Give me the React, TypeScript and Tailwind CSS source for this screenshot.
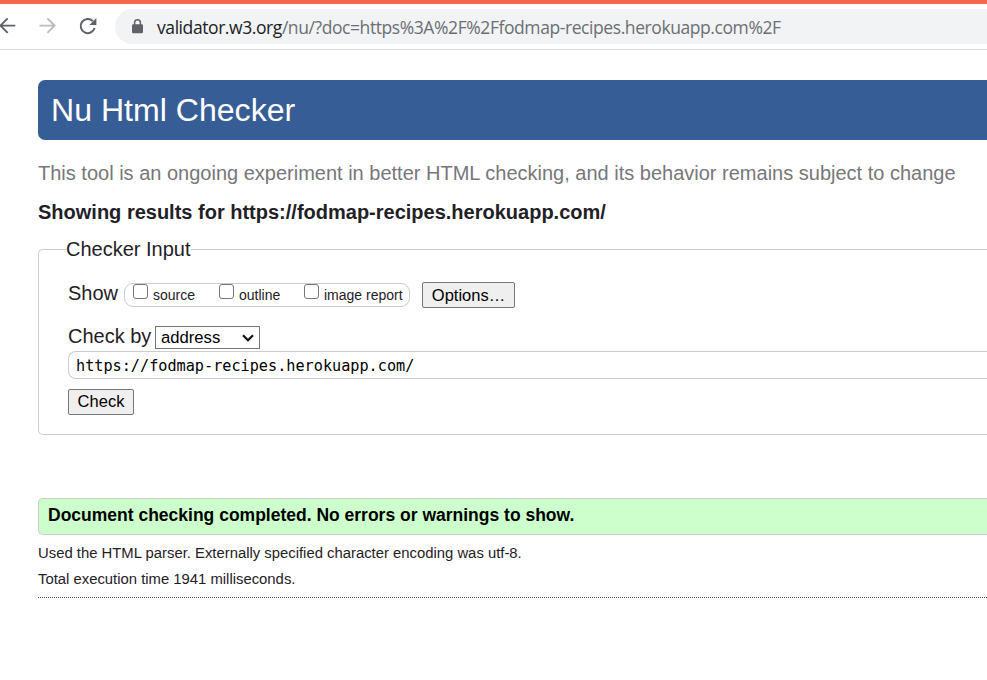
import type { ReactNode } from "react";

function CheckOption({ children, className }: { children: ReactNode; className: string }) {
  return (
    <label className={`flex h-[22px] items-start text-[14px] leading-[23px] ${className}`}>
      <span className="mr-[5px] size-[15px] shrink-0 rounded-[3px] border-[1.5px] border-[#767676] bg-white" />
      <span className="whitespace-nowrap">{children}</span>
    </label>
  );
}

function BrowserBar() {
  return (
    <div className="flex h-[46px] items-start border-b border-[#dadce0] bg-white">
      <svg className="mt-[14px] h-[16px] w-[16px] shrink-0" viewBox="0 0 16 16" fill="none" stroke="#5f6368" strokeWidth="1.9">
        <path d="M15.3 7.6H0.5M7.7 0.4L0.5 7.6L7.7 14.8" />
      </svg>
      <svg className="ml-[23px] mt-[14px] h-[16px] w-[17px] shrink-0" viewBox="0 0 17 16" fill="none" stroke="#babcbe" strokeWidth="1.9">
        <path d="M0.5 7.6H15.6M8.4 0.4L15.6 7.6L8.4 14.8" />
      </svg>
      <svg className="ml-[23px] mt-[13px] h-[18px] w-[18px] shrink-0" viewBox="0 0 18 18" fill="none">
        <path d="M15.6 11A7.1 7.1 0 1 1 13.9 4.1" stroke="#5f6368" strokeWidth="2" />
        <path d="M17.4 1V8H10.4Z" fill="#5f6368" />
      </svg>
      <div className="ml-[18px] mt-[5px] flex h-[35px] flex-1 items-center overflow-hidden rounded-l-full bg-[#f1f3f4] pl-[17px]">
        <svg className="h-[15px] w-[11px] shrink-0" viewBox="0 0 11 15">
          <path d="M2.6 6V3.7a2.9 2.9 0 0 1 5.8 0V6" fill="none" stroke="#5f6368" strokeWidth="1.5" />
          <rect x="0" y="5.3" width="11" height="9" rx="1.2" fill="#5f6368" />
        </svg>
        <span className="ml-[14px] whitespace-nowrap font-['Open_Sans','Noto_Sans',sans-serif] text-[17.5px] leading-[26px] tracking-[-0.42px] text-[#202124]">
          validator.w3.org
          <span className="text-[#6b6f73]">/nu/?doc=https%3A%2F%2Ffodmap-recipes.herokuapp.com%2F</span>
        </span>
      </div>
    </div>
  );
}

export default function App() {
  return (
    <div className="h-[680px] w-full overflow-hidden bg-white font-['Liberation_Sans',Arial,sans-serif] text-[#1f2126]">
      <div className="h-[4px] bg-[#f26950]" />
      <BrowserBar />
      <main className="pl-[38px] pt-[30px]">
        <h1 className="h-[60px] rounded-l-[7px] bg-[#365d95] pl-[13px] text-[32.1px] leading-[60px] text-white">
          Nu Html Checker
        </h1>
        <p className="mt-[20px] h-[26px] whitespace-nowrap text-[20px] leading-[26px] text-[#76777a]">
          This tool is an ongoing experiment in better HTML checking, and its behavior remains subject to change
        </p>
        <h2 className="mt-[13px] h-[26px] whitespace-nowrap text-[20px] font-bold leading-[26px]">
          Showing results for https://fodmap-recipes.herokuapp.com/
        </h2>
        <fieldset className="mt-[11px] h-[199px] rounded-l-[5px] border border-r-0 border-[#ccc] pl-[29px]">
          <legend className="-ml-[2px] h-[26px] whitespace-nowrap text-[20px] leading-[26px]">Checker Input</legend>
          <div className="mt-[20px] flex h-[26px] items-center">
            <span className="w-[56px] text-[20px] leading-[26px]">
              <span className="relative -top-[2px]">Show</span>
            </span>
            <div className="flex h-[24px] w-[286px] rounded-[9px] border border-[#ccc] pl-[8px]">
              <CheckOption className="w-[86px]">source</CheckOption>
              <CheckOption className="w-[85px]">outline</CheckOption>
              <CheckOption className="w-[100px]">image report</CheckOption>
            </div>
            <button className="ml-[12px] h-[26px] w-[93px] rounded-[2px] border border-[#767676] bg-[#efefef] text-[16.5px] leading-[22px] text-black">
              Options…
            </button>
          </div>
          <div className="mt-[18px] flex h-[23px]">
            <span className="w-[87px] whitespace-nowrap text-[20px] leading-[20px]">Check by</span>
            <div className="flex h-[23px] w-[105px] items-center justify-between border border-[#767676] pl-[5px] pr-[5px] text-[16.67px] leading-[21px] text-black">
              address
              <svg className="h-[8px] w-[12px]" viewBox="0 0 12 8" fill="none" stroke="#111" strokeWidth="2.2">
                <path d="M1 1.3L6 6.3L11 1.3" />
              </svg>
            </div>
          </div>
          <div className="mt-[2px] h-[28px] rounded-l-[8px] border border-r-0 border-[#ccc] pl-[7px] font-['DejaVu_Sans_Mono',monospace] text-[15.2px] leading-[29px] text-black">
            https://fodmap-recipes.herokuapp.com/
          </div>
          <button className="mt-[10px] block h-[26px] w-[66px] rounded-[2px] border border-[#767676] bg-[#efefef] pb-[2px] text-[16.5px] leading-[22px] text-black">
            Check
          </button>
        </fieldset>
        <p className="mt-[63px] h-[37px] rounded-l-[5px] border border-r-0 border-[#ccc] bg-[#ccffcc] pl-[9px] text-[17.5px] font-bold leading-[32px] text-black">
          Document checking completed. No errors or warnings to show.
        </p>
        <p className="mt-[5px] h-[26px] text-[14.85px] leading-[26px]">
          Used the HTML parser. Externally specified character encoding was utf-8.
        </p>
        <p className="h-[26px] text-[14.85px] leading-[26px]">Total execution time 1941 milliseconds.</p>
        <div className="mt-[5px] border-t border-dotted border-[#555]" />
      </main>
    </div>
  );
}
